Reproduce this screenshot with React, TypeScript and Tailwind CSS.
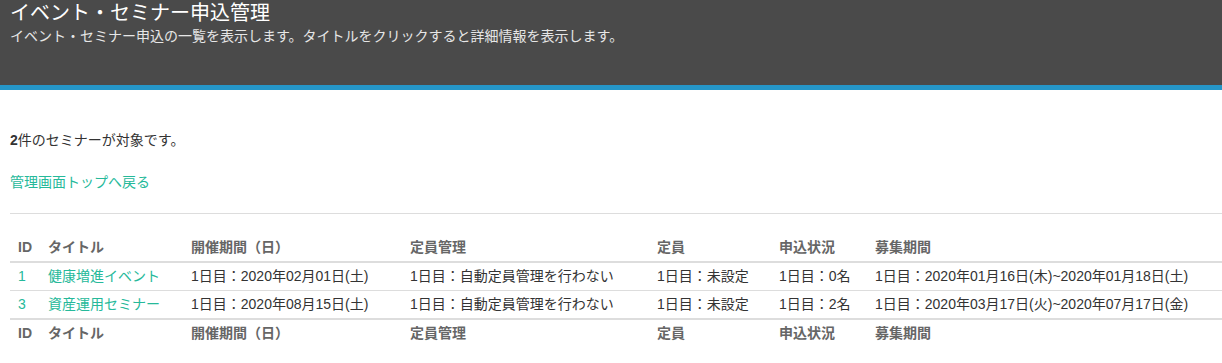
const seminars = [
  {
    id: 1,
    title: "健康増進イベント",
    date: "1日目：2020年02月01日(土)",
    capMgmt: "1日目：自動定員管理を行わない",
    cap: "1日目：未設定",
    status: "1日目：0名",
    period: "1日目：2020年01月16日(木)~2020年01月18日(土)",
  },
  {
    id: 3,
    title: "資産運用セミナー",
    date: "1日目：2020年08月15日(土)",
    capMgmt: "1日目：自動定員管理を行わない",
    cap: "1日目：未設定",
    status: "1日目：2名",
    period: "1日目：2020年03月17日(火)~2020年07月17日(金)",
  },
];

const HeadCells = () => (
  <>
    <th className="w-[30px] px-[8px] py-[4px] text-left font-bold">ID</th>
    <th className="w-[143px] px-[8px] py-[4px] text-left font-bold">タイトル</th>
    <th className="w-[219px] px-[8px] py-[4px] text-left font-bold">開催期間（日）</th>
    <th className="w-[247px] px-[8px] py-[4px] text-left font-bold">定員管理</th>
    <th className="w-[122px] px-[8px] py-[4px] text-left font-bold">定員</th>
    <th className="w-[96px] px-[8px] py-[4px] text-left font-bold">申込状況</th>
    <th className="px-[8px] py-[4px] text-left font-bold">募集期間</th>
  </>
);

const App = () => {
  return (
    <div className="min-h-screen bg-white font-['Liberation_Sans','Noto_Sans_CJK_JP',sans-serif] text-[14px] text-[#333]">
      <header className="h-[90px] border-b-[5px] border-[#2596c8] bg-[#4a4a4a] px-[10px]">
        <h1 className="text-[20px] leading-[26px] text-white">イベント・セミナー申込管理</h1>
        <p className="text-[14px] leading-[20px] text-[#e6e6e6]">
          イベント・セミナー申込の一覧を表示します。タイトルをクリックすると詳細情報を表示します。
        </p>
      </header>

      <main className="pl-[10px]">
        <p className="mt-[40px] leading-[20px]">
          <b>2</b>件のセミナーが対象です。
        </p>
        <a href="#" className="mt-[22px] block leading-[20px] text-[#26b99a]">
          管理画面トップへ戻る
        </a>
        <hr className="mt-[21px] border-t border-[#dddddd]" />

        <table className="mt-[20px] w-full table-fixed border-collapse leading-[19px]">
          <thead className="text-[#666]">
            <tr className="border-b-2 border-[#dddddd]">
              <HeadCells />
            </tr>
          </thead>
          <tbody>
            {seminars.map((s, i) => (
              <tr
                key={s.id}
                className={i === seminars.length - 1 ? "border-b-2 border-[#dddddd]" : "border-b border-[#dddddd]"}
              >
                <td className="px-[8px] py-[4px] text-[#26b99a]">{s.id}</td>
                <td className="px-[8px] py-[4px]">
                  <a href="#" className="text-[#26b99a]">{s.title}</a>
                </td>
                <td className="px-[8px] py-[4px] whitespace-nowrap">{s.date}</td>
                <td className="px-[8px] py-[4px] whitespace-nowrap">{s.capMgmt}</td>
                <td className="px-[8px] py-[4px] whitespace-nowrap">{s.cap}</td>
                <td className="px-[8px] py-[4px] whitespace-nowrap">{s.status}</td>
                <td className="px-[8px] py-[4px] whitespace-nowrap">{s.period}</td>
              </tr>
            ))}
          </tbody>
          <tfoot className="text-[#666]">
            <tr>
              <HeadCells />
            </tr>
          </tfoot>
        </table>
      </main>
    </div>
  );
};

export default App;
